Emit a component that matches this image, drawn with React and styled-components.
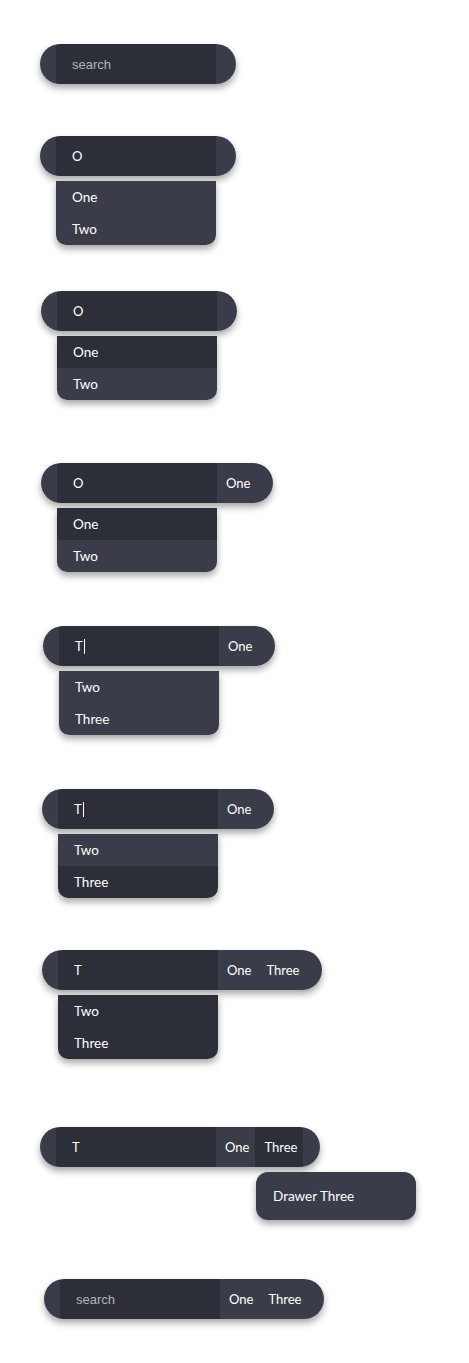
import React from "react";
import styled, { createGlobalStyle } from "styled-components";

const GlobalStyle = createGlobalStyle`
    html, body {
        margin: 0;
        padding: 0;
        background: #ffffff;
    }
    body {
        font-family: Lato, "Noto Sans", sans-serif;
    }
`;

const DARK = "#2c2e38";
const LIGHT = "#3a3d49";

// each demo state of the search box, top to bottom
const demos = [
    { top: 44, left: 40, value: "", chips: [] },
    { top: 52, left: 40, value: "O", chips: [], items: [["One", LIGHT], ["Two", LIGHT]] },
    { top: 46, left: 41, value: "O", chips: [], items: [["One", DARK], ["Two", LIGHT]] },
    { top: 63, left: 41, value: "O", chips: [["One", LIGHT]], items: [["One", DARK], ["Two", LIGHT]] },
    { top: 54, left: 43, value: "T", caret: true, chips: [["One", LIGHT]], items: [["Two", LIGHT], ["Three", LIGHT]] },
    { top: 54, left: 42, value: "T", caret: true, chips: [["One", LIGHT]], items: [["Two", LIGHT], ["Three", DARK]] },
    { top: 52, left: 42, value: "T", chips: [["One", LIGHT], ["Three", LIGHT]], items: [["Two", DARK], ["Three", DARK]] },
    { top: 68, left: 40, value: "T", chips: [["One", LIGHT], ["Three", DARK]], drawer: "Drawer Three" },
    { top: 59, left: 44, value: "", chips: [["One", LIGHT], ["Three", LIGHT]] },
];

const App = () => {
    return (
        <>
            <GlobalStyle />
            <Page>
                {demos.map((demo, index) => (
                    <Demo key={index} $top={demo.top} $left={demo.left}>
                        <Bar>
                            <Cap $side="left" />
                            <Input>
                                {demo.value ? (
                                    <Value>
                                        {demo.value}
                                        {demo.caret && <Caret />}
                                    </Value>
                                ) : (
                                    <Placeholder>search</Placeholder>
                                )}
                            </Input>
                            {demo.chips.map(([label, bg]) => (
                                <Chip key={label} $bg={bg}>{label}</Chip>
                            ))}
                            <Cap $side="right" $narrow={demo.chips.length > 0} />
                        </Bar>

                        {demo.items && (
                            <Dropdown>
                                {demo.items.map(([label, bg]) => (
                                    <Item key={label} $bg={bg}>{label}</Item>
                                ))}
                            </Dropdown>
                        )}

                        {demo.drawer && <Drawer>{demo.drawer}</Drawer>}
                    </Demo>
                ))}
            </Page>
        </>
    );
};

const Page = styled.div`
    display: flex;
    flex-direction: column;
    align-items: flex-start;
    width: 469px;
    min-height: 1363px;
    box-sizing: border-box;
`;

const Demo = styled.div`
    display: flex;
    flex-direction: column;
    align-items: flex-start;
    margin-top: ${(p) => p.$top}px;
    margin-left: ${(p) => p.$left}px;
`;

const Bar = styled.div`
    display: flex;
    align-items: stretch;
    height: 40px;
    border-radius: 20px;
    overflow: hidden;
    box-shadow: 0 4px 7px rgba(0, 0, 0, 0.35);
    color: #ffffff;
    font-size: 13px;
`;

const Cap = styled.div`
    width: ${(p) => (p.$side === "left" ? 16 : p.$narrow ? 17 : 20)}px;
    background: ${LIGHT};
`;

const Input = styled.div`
    display: flex;
    align-items: center;
    width: 160px;
    box-sizing: border-box;
    padding-left: 16px;
    background: ${DARK};
`;

const Value = styled.span`
    display: inline-flex;
    align-items: center;
`;

const Caret = styled.span`
    display: inline-block;
    width: 1px;
    height: 15px;
    margin-left: 1px;
    background: #ffffff;
`;

const Placeholder = styled.span`
    font-family: "Liberation Sans", Arial, sans-serif;
    color: #b4b5bc;
`;

const Chip = styled.div`
    display: flex;
    align-items: center;
    padding: 0 6px 0 9px;
    background: ${(p) => p.$bg};
`;

const Dropdown = styled.div`
    display: flex;
    flex-direction: column;
    width: 160px;
    margin-top: 5px;
    margin-left: 16px;
    border-radius: 0 0 10px 10px;
    overflow: hidden;
    box-shadow: 0 4px 7px rgba(0, 0, 0, 0.35);
`;

const Item = styled.div`
    display: flex;
    align-items: center;
    height: 32px;
    padding-left: 16px;
    background: ${(p) => p.$bg};
    color: #ffffff;
    font-size: 13.5px;
`;

const Drawer = styled.div`
    display: flex;
    align-items: center;
    width: 160px;
    height: 48px;
    box-sizing: border-box;
    margin-top: 5px;
    margin-left: 216px;
    padding-left: 17px;
    border-radius: 12px;
    background: ${LIGHT};
    color: #ffffff;
    font-size: 13.5px;
    box-shadow: 0 4px 7px rgba(0, 0, 0, 0.35);
`;

export default App;
